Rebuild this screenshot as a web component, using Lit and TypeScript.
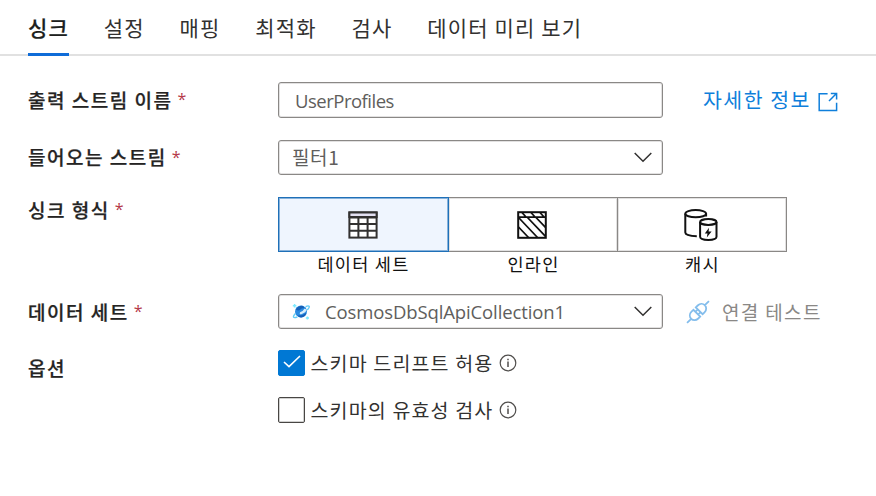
import { LitElement, html, css, svg } from "lit";
import { customElement, property } from "lit/decorators.js";

const tableIcon = svg`
  <svg width="30" height="28" viewBox="0 0 30 28" fill="none" stroke="#323130" stroke-width="2">
    <rect x="1.4" y="1.4" width="27.2" height="25.2" fill="#fff"></rect>
    <path d="M1.4 1.4H28.6V6H1.4Z" fill="#e3e0f2"></path>
    <path d="M1 6.4H29M1 13H29M1 19.8H29M10.4 6.4V27M19.6 6.4V27"></path>
  </svg>`;

const inlineIcon = svg`
  <svg width="30" height="28" viewBox="0 0 30 28" fill="none" stroke="#111" stroke-width="2">
    <rect x="1.2" y="1.2" width="27.6" height="25.6"></rect>
    <path d="M1 6.2H29M5 1.5L9 6M14 1.5L18 6M23 1.5L27 6M1.5 16L11.5 26.5M2 7L20.5 26.5M10.5 6.5L28.5 25.4M19 6.5L28.5 16.4" stroke-width="1.8"></path>
  </svg>`;

const cacheIcon = svg`
  <svg width="34" height="32" viewBox="0 0 34 32" fill="none" stroke="#111" stroke-width="2">
    <ellipse cx="11.7" cy="4.7" rx="10.4" ry="3.6"></ellipse>
    <path d="M1.3 4.7V23.5C1.3 26 6 27 12.8 27.2M22.1 4.7V7.5"></path>
    <ellipse cx="24.3" cy="13" rx="8.2" ry="2.9"></ellipse>
    <path d="M16.1 13V27.8C16.1 32 32.5 32 32.5 27.8V13"></path>
    <path d="M25 18.8L20.8 24.4H23.5L22.8 28.4L27.6 22.6H24.6Z" fill="#111" stroke="none"></path>
  </svg>`;

const chevron = svg`
  <svg width="18" height="11" viewBox="0 0 18 11" fill="none" stroke="#323130" stroke-width="1.5">
    <path d="M.7 1L9 9.3L17.3 1"></path>
  </svg>`;

const cosmosIcon = svg`
  <svg width="18" height="18" viewBox="0 0 18 18">
    <circle cx="9" cy="8.6" r="6" fill="#2b8be0"></circle>
    <path d="M3.8 6.4Q6.4 2.4 11 2.9Q13 4 11.8 5.2Q9 4.8 8.2 6.8Q6.4 8.4 3.8 6.4Z" fill="#1560b8"></path>
    <path d="M8 9.2Q11 8.6 12.4 5.8L14.6 6.6Q14.6 9.4 8.8 11.6Q7 11.2 8 9.2Z" fill="#d9eefb"></path>
    <path d="M5.4 12.4Q10.6 13 14.4 9.8Q13 14.6 9 14.4Q6.8 14.4 5.4 12.4Z" fill="#1560b8"></path>
    <path d="M3.4 10.6C-.4 14.6 2 15.4 5.4 13.8M13.6 3.6C17 2 19 3.2 15.2 7" fill="none" stroke="#62cdf6" stroke-width="1.4"></path>
    <path d="M2.6 1V4.6M.8 2.8H4.4M15.4 13.4V16.6M13.8 15H17" stroke="#7eeaff" stroke-width="1.5"></path>
  </svg>`;

const externalIcon = svg`
  <svg width="20" height="20" viewBox="0 0 20 20" fill="none" stroke="#0f7fdb" stroke-width="1.5">
    <path d="M9.6 1.8H1.2V18.4H18.6V10.8M11 9L18.2 1.8M12.8 1.6H18.6V7.4"></path>
  </svg>`;

const plugIcon = svg`
  <svg width="24" height="24" viewBox="0 0 24 24" fill="none" stroke="#83bdec" stroke-width="1.8">
    <g transform="rotate(-45 12 12)">
      <path d="M-3.5 12H2.4M21.6 12H27.5M10.3 7.2H7.6C.7 7.2 .7 16.8 7.6 16.8H10.3ZM13.7 7.2H16.4C23.3 7.2 23.3 16.8 16.4 16.8H13.7ZM10.3 10H13.7M10.3 14H13.7"></path>
    </g>
  </svg>`;

const infoIcon = svg`
  <svg width="18" height="18" viewBox="0 0 18 18" fill="none" stroke="#504e4c">
    <circle cx="9" cy="9" r="7.8" stroke-width="1.2"></circle>
    <path d="M9 7.6V13M9 4.8V6.3" stroke-width="1.5"></path>
  </svg>`;

const textBase = css`
  :host {
    font-family: "Noto Sans CJK KR", sans-serif;
    color: #323130;
  }
  svg {
    display: block;
    flex: none;
    overflow: visible;
  }
`;

@customElement("form-row")
class FormRow extends LitElement {
  @property() label = "";
  @property({ type: Boolean }) required = false;

  static styles = [
    textBase,
    css`
      :host {
        display: grid;
        grid-template-columns: 250px 1fr;
        padding-left: 28px;
      }
      .label {
        display: flex;
        gap: 5px;
        height: var(--label-height, 34px);
        align-items: center;
        font-size: 19px;
        font-weight: 500;
        -webkit-text-stroke: 0.25px #252423;
        letter-spacing: 1.5px;
        white-space: pre;
        color: #252423;
      }
      .star {
        color: #b5394a;
        -webkit-text-stroke: 0;
        font: 400 16px "Open Sans", sans-serif;
      }
      .field {
        display: flex;
        align-items: center;
      }
    `,
  ];

  render() {
    return html`
      <div class="label">
        <span>${this.label}</span>${this.required ? html`<span class="star">*</span>` : ""}
      </div>
      <div class="field"><slot></slot></div>
    `;
  }
}

@customElement("check-option")
class CheckOption extends LitElement {
  @property() label = "";
  @property({ type: Boolean }) checked = false;

  static styles = [
    textBase,
    css`
      :host {
        display: flex;
        align-items: center;
        height: 26px;
      }
      .box {
        box-sizing: border-box;
        width: 27px;
        height: 26px;
        border: 1px solid #484644;
        box-shadow: inset 0 0 0 1px #48464440;
        border-radius: 2px;
        display: grid;
        place-items: center;
      }
      .box.on {
        background: #0078d4;
        border-color: #0078d4;
        box-shadow: none;
      }
      .box svg {
        margin-bottom: 3px;
      }
      .text {
        margin: -1px 6px 0 5.5px;
        font-size: 19.5px;
        letter-spacing: 1.15px;
        white-space: pre;
      }
    `,
  ];

  render() {
    return html`
      <div class="box ${this.checked ? "on" : ""}">
        ${this.checked
          ? svg`<svg width="18" height="14" viewBox="0 0 18 14" fill="none" stroke="#fff" stroke-width="1.6"><path d="M1 7L6 11.6L17 1"></path></svg>`
          : ""}
      </div>
      <span class="text">${this.label}</span>${infoIcon}
    `;
  }
}

@customElement("app-root")
class AppRoot extends LitElement {
  static styles = [
    textBase,
    css`
      :host {
        display: block;
        height: 496px;
        overflow: hidden;
        background: #fff;
      }
      .tabs {
        box-sizing: border-box;
        display: flex;
        gap: 34.8px;
        height: 56px;
        padding-left: 28px;
        border-bottom: 2px solid #e1e1e1;
        font-size: 21px;
        letter-spacing: 1.15px;
        line-height: 55px;
        white-space: pre;
      }
      .tab {
        height: 56px;
      }
      .tab.active {
        box-sizing: border-box;
        border-bottom: 3px solid #0f6cd8;
        font-weight: 500;
        color: #201f1e;
        -webkit-text-stroke: 0.2px #201f1e;
      }
      .form {
        display: flex;
        flex-direction: column;
        padding-top: 26px;
      }
      .input {
        box-sizing: border-box;
        display: flex;
        align-items: center;
        width: 385px;
        height: 35px;
        border: 1px solid #8a8886;
        box-shadow: inset 0 0 0 1px #8a888640;
        border-radius: 3px;
        color: #605e5c;
        font-size: 19px;
        letter-spacing: 0.6px;
      }
      .input.name {
        height: 36px;
        padding: 0 0 0 16px;
        font-family: "Open Sans", sans-serif;
        font-size: 18.5px;
        letter-spacing: -0.5px;
      }
      .select {
        padding: 0 10px 0 13px;
      }
      .value {
        flex: 1;
        margin-top: -2px;
      }
      .latin {
        margin-top: -1px;
        padding-left: 15px;
        font-family: "Open Sans", sans-serif;
        font-size: 18.5px;
        letter-spacing: -0.12px;
      }
      .link {
        display: flex;
        align-items: center;
        gap: 7px;
        margin: -2px 0 0 40px;
        color: #0f7fdb;
        font-size: 20.5px;
        letter-spacing: 1.5px;
      }
      .link svg {
        margin-top: 5px;
      }
      .test {
        display: flex;
        align-items: center;
        gap: 12px;
        margin-left: 23px;
        color: #8a8886;
        font-size: 19px;
        letter-spacing: 1.35px;
      }
      .incoming { margin-top: 22px; --label-height: 33px; }
      .type { margin-top: 18px; --label-height: 32px; }
      .dataset { margin-top: 18px; }
      .options { margin-top: 21px; }
      .kinds {
        display: grid;
        grid-template-columns: 171px 169px 169px;
        margin-top: 4px;
      }
      .kind {
        display: flex;
        flex-direction: column;
        align-items: center;
        height: 79px;
        color: #111;
        font-size: 17.5px;
        letter-spacing: 1.3px;
        line-height: 24px;
      }
      .tile {
        box-sizing: border-box;
        width: 100%;
        height: 55px;
        display: grid;
        place-items: center;
        padding-right: 2px;
        border: 1px solid #8a8886;
        border-left: 0;
        box-shadow: inset 0 0 0 1px #8a888640;
      }
      .tile.chosen {
        border: 1px solid #1f70b8;
        box-shadow: inset 0 0 0 1px #1f70b880;
        background: #eff5fe;
      }
      .checks {
        display: flex;
        flex-direction: column;
        gap: 21px;
      }
    `,
  ];

  private tabs = ["싱크", "설정", "매핑", "최적화", "검사", "데이터 미리 보기"];
  private kinds = [
    { name: "데이터 세트", icon: tableIcon },
    { name: "인라인", icon: inlineIcon },
    { name: "캐시", icon: cacheIcon },
  ];

  render() {
    return html`
      <nav class="tabs">
        ${this.tabs.map((t, i) => html`<span class="tab ${i === 0 ? "active" : ""}">${t}</span>`)}
      </nav>
      <div class="form">
        <form-row label="출력 스트림 이름" required>
          <div class="input name">UserProfiles</div>
          <a class="link"><span>자세한 정보</span>${externalIcon}</a>
        </form-row>
        <form-row class="incoming" label="들어오는 스트림" required>
          <div class="input select"><span class="value">필터1</span>${chevron}</div>
        </form-row>
        <form-row class="type" label="싱크 형식" required>
          <div class="kinds">
            ${this.kinds.map(
              (k, i) => html`<div class="kind">
                <div class="tile ${i === 0 ? "chosen" : ""}">${k.icon}</div>
                <span>${k.name}</span>
              </div>`,
            )}
          </div>
        </form-row>
        <form-row class="dataset" label="데이터 세트" required>
          <div class="input select">
            ${cosmosIcon}<span class="value latin">CosmosDbSqlApiCollection1</span>${chevron}
          </div>
          <div class="test">${plugIcon}<span>연결 테스트</span></div>
        </form-row>
        <form-row class="options" label="옵션">
          <div class="checks">
            <check-option label="스키마 드리프트 허용" checked></check-option>
            <check-option label="스키마의 유효성 검사"></check-option>
          </div>
        </form-row>
      </div>
    `;
  }
}
